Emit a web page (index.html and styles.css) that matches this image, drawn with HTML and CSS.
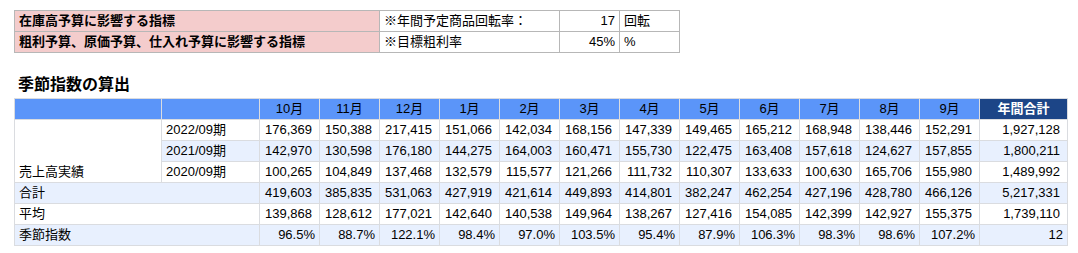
FILE: index.html
```html
<!DOCTYPE html>
<html lang="ja">
<head>
<meta charset="utf-8">
<link rel="stylesheet" href="styles.css">
</head>
<body>
<div class="page">
  <table class="params">
    <colgroup><col class="p1"><col class="p2"><col class="p3"><col class="p4"></colgroup>
    <tr>
      <td class="pink">在庫高予算に影響する指標</td>
      <td>※年間予定商品回転率：</td>
      <td class="num">17</td>
      <td>回転</td>
    </tr>
    <tr>
      <td class="pink">粗利予算、原価予算、仕入れ予算に影響する指標</td>
      <td>※目標粗利率</td>
      <td class="num">45%</td>
      <td>%</td>
    </tr>
  </table>

  <h2 class="title">季節指数の算出</h2>

  <table class="season">
    <colgroup>
      <col class="c-label"><col class="c-period">
      <col class="c-m"><col class="c-m"><col class="c-m"><col class="c-m"><col class="c-m"><col class="c-m">
      <col class="c-m"><col class="c-m"><col class="c-m"><col class="c-m"><col class="c-m"><col class="c-m">
      <col class="c-total">
    </colgroup>
    <thead>
      <tr>
        <th></th><th></th>
        <th>10月</th><th>11月</th><th>12月</th><th>1月</th><th>2月</th><th>3月</th>
        <th>4月</th><th>5月</th><th>6月</th><th>7月</th><th>8月</th><th>9月</th>
        <th class="total-h">年間合計</th>
      </tr>
    </thead>
    <tbody>
      <tr>
        <td class="merged" rowspan="3">売上高実績</td>
        <td>2022/09期</td>
        <td class="num">176,369</td><td class="num">150,388</td><td class="num">217,415</td><td class="num">151,066</td><td class="num">142,034</td><td class="num">168,156</td>
        <td class="num">147,339</td><td class="num">149,465</td><td class="num">165,212</td><td class="num">168,948</td><td class="num">138,446</td><td class="num">152,291</td>
        <td class="num">1,927,128</td>
      </tr>
      <tr class="alt">
        <td>2021/09期</td>
        <td class="num">142,970</td><td class="num">130,598</td><td class="num">176,180</td><td class="num">144,275</td><td class="num">164,003</td><td class="num">160,471</td>
        <td class="num">155,730</td><td class="num">122,475</td><td class="num">163,408</td><td class="num">157,618</td><td class="num">124,627</td><td class="num">157,855</td>
        <td class="num">1,800,211</td>
      </tr>
      <tr>
        <td>2020/09期</td>
        <td class="num">100,265</td><td class="num">104,849</td><td class="num">137,468</td><td class="num">132,579</td><td class="num">115,577</td><td class="num">121,266</td>
        <td class="num">111,732</td><td class="num">110,307</td><td class="num">133,633</td><td class="num">100,630</td><td class="num">165,706</td><td class="num">155,980</td>
        <td class="num">1,489,992</td>
      </tr>
      <tr class="alt">
        <td colspan="2">合計</td>
        <td class="num">419,603</td><td class="num">385,835</td><td class="num">531,063</td><td class="num">427,919</td><td class="num">421,614</td><td class="num">449,893</td>
        <td class="num">414,801</td><td class="num">382,247</td><td class="num">462,254</td><td class="num">427,196</td><td class="num">428,780</td><td class="num">466,126</td>
        <td class="num">5,217,331</td>
      </tr>
      <tr>
        <td colspan="2">平均</td>
        <td class="num">139,868</td><td class="num">128,612</td><td class="num">177,021</td><td class="num">142,640</td><td class="num">140,538</td><td class="num">149,964</td>
        <td class="num">138,267</td><td class="num">127,416</td><td class="num">154,085</td><td class="num">142,399</td><td class="num">142,927</td><td class="num">155,375</td>
        <td class="num">1,739,110</td>
      </tr>
      <tr class="alt">
        <td colspan="2">季節指数</td>
        <td class="pct">96.5%</td><td class="pct">88.7%</td><td class="pct">122.1%</td><td class="pct">98.4%</td><td class="pct">97.0%</td><td class="pct">103.5%</td>
        <td class="pct">95.4%</td><td class="pct">87.9%</td><td class="pct">106.3%</td><td class="pct">98.3%</td><td class="pct">98.6%</td><td class="pct">107.2%</td>
        <td class="pct">12</td>
      </tr>
    </tbody>
  </table>
</div>
</body>
</html>
```

FILE: styles.css
```css
html, body {
  margin: 0;
  padding: 0;
  background: #ffffff;
}

body {
  font-family: "Liberation Sans", Arial, "Noto Sans CJK JP", sans-serif;
  font-size: 13px;
  color: #000000;
}

.page {
  padding: 10px 0 0 14px;
}

table {
  border-collapse: collapse;
  table-layout: fixed;
}

td, th {
  height: 20px;
  padding: 0 4px;
  line-height: 20px;
  white-space: nowrap;
  overflow: hidden;
  box-sizing: border-box;
}

/* parameter table */
.params {
  width: 666px;
}

.params td {
  border: 1px solid #b7b7b7;
}

.p1 { width: 365px; }
.p2 { width: 180px; }
.p3 { width: 60px; }
.p4 { width: 60px; }

.params .pink {
  background: #f4cccc;
  font-weight: bold;
}

.params .num {
  text-align: right;
  padding-right: 4px;
}

/* heading */
.title {
  margin: 0;
  padding: 23px 0 4px 4px;
  font-size: 16px;
  line-height: 18px;
  font-weight: bold;
  font-family: "Liberation Sans", Arial, "Noto Sans CJK JP", sans-serif;
}

/* season table */
.season {
  width: 1053px;
}

.c-label { width: 147px; }
.c-period { width: 98px; }
.c-m { width: 60px; }
.c-total { width: 88px; }

.season th,
.season td {
  border: 1px solid #dadce0;
}

.season th {
  background: #5b95f9;
  font-weight: normal;
  text-align: center;
}

.season th.total-h {
  background: #1c4587;
  color: #ffffff;
  font-weight: bold;
}

.season td {
  background: #ffffff;
}

.season tr.alt td {
  background: #e8f0fe;
}

.season td.merged {
  vertical-align: bottom;
  background: #ffffff;
}

.season td.num {
  text-align: right;
  padding-right: 7px;
}

.season td.pct {
  text-align: right;
  padding-right: 4px;
}
```
